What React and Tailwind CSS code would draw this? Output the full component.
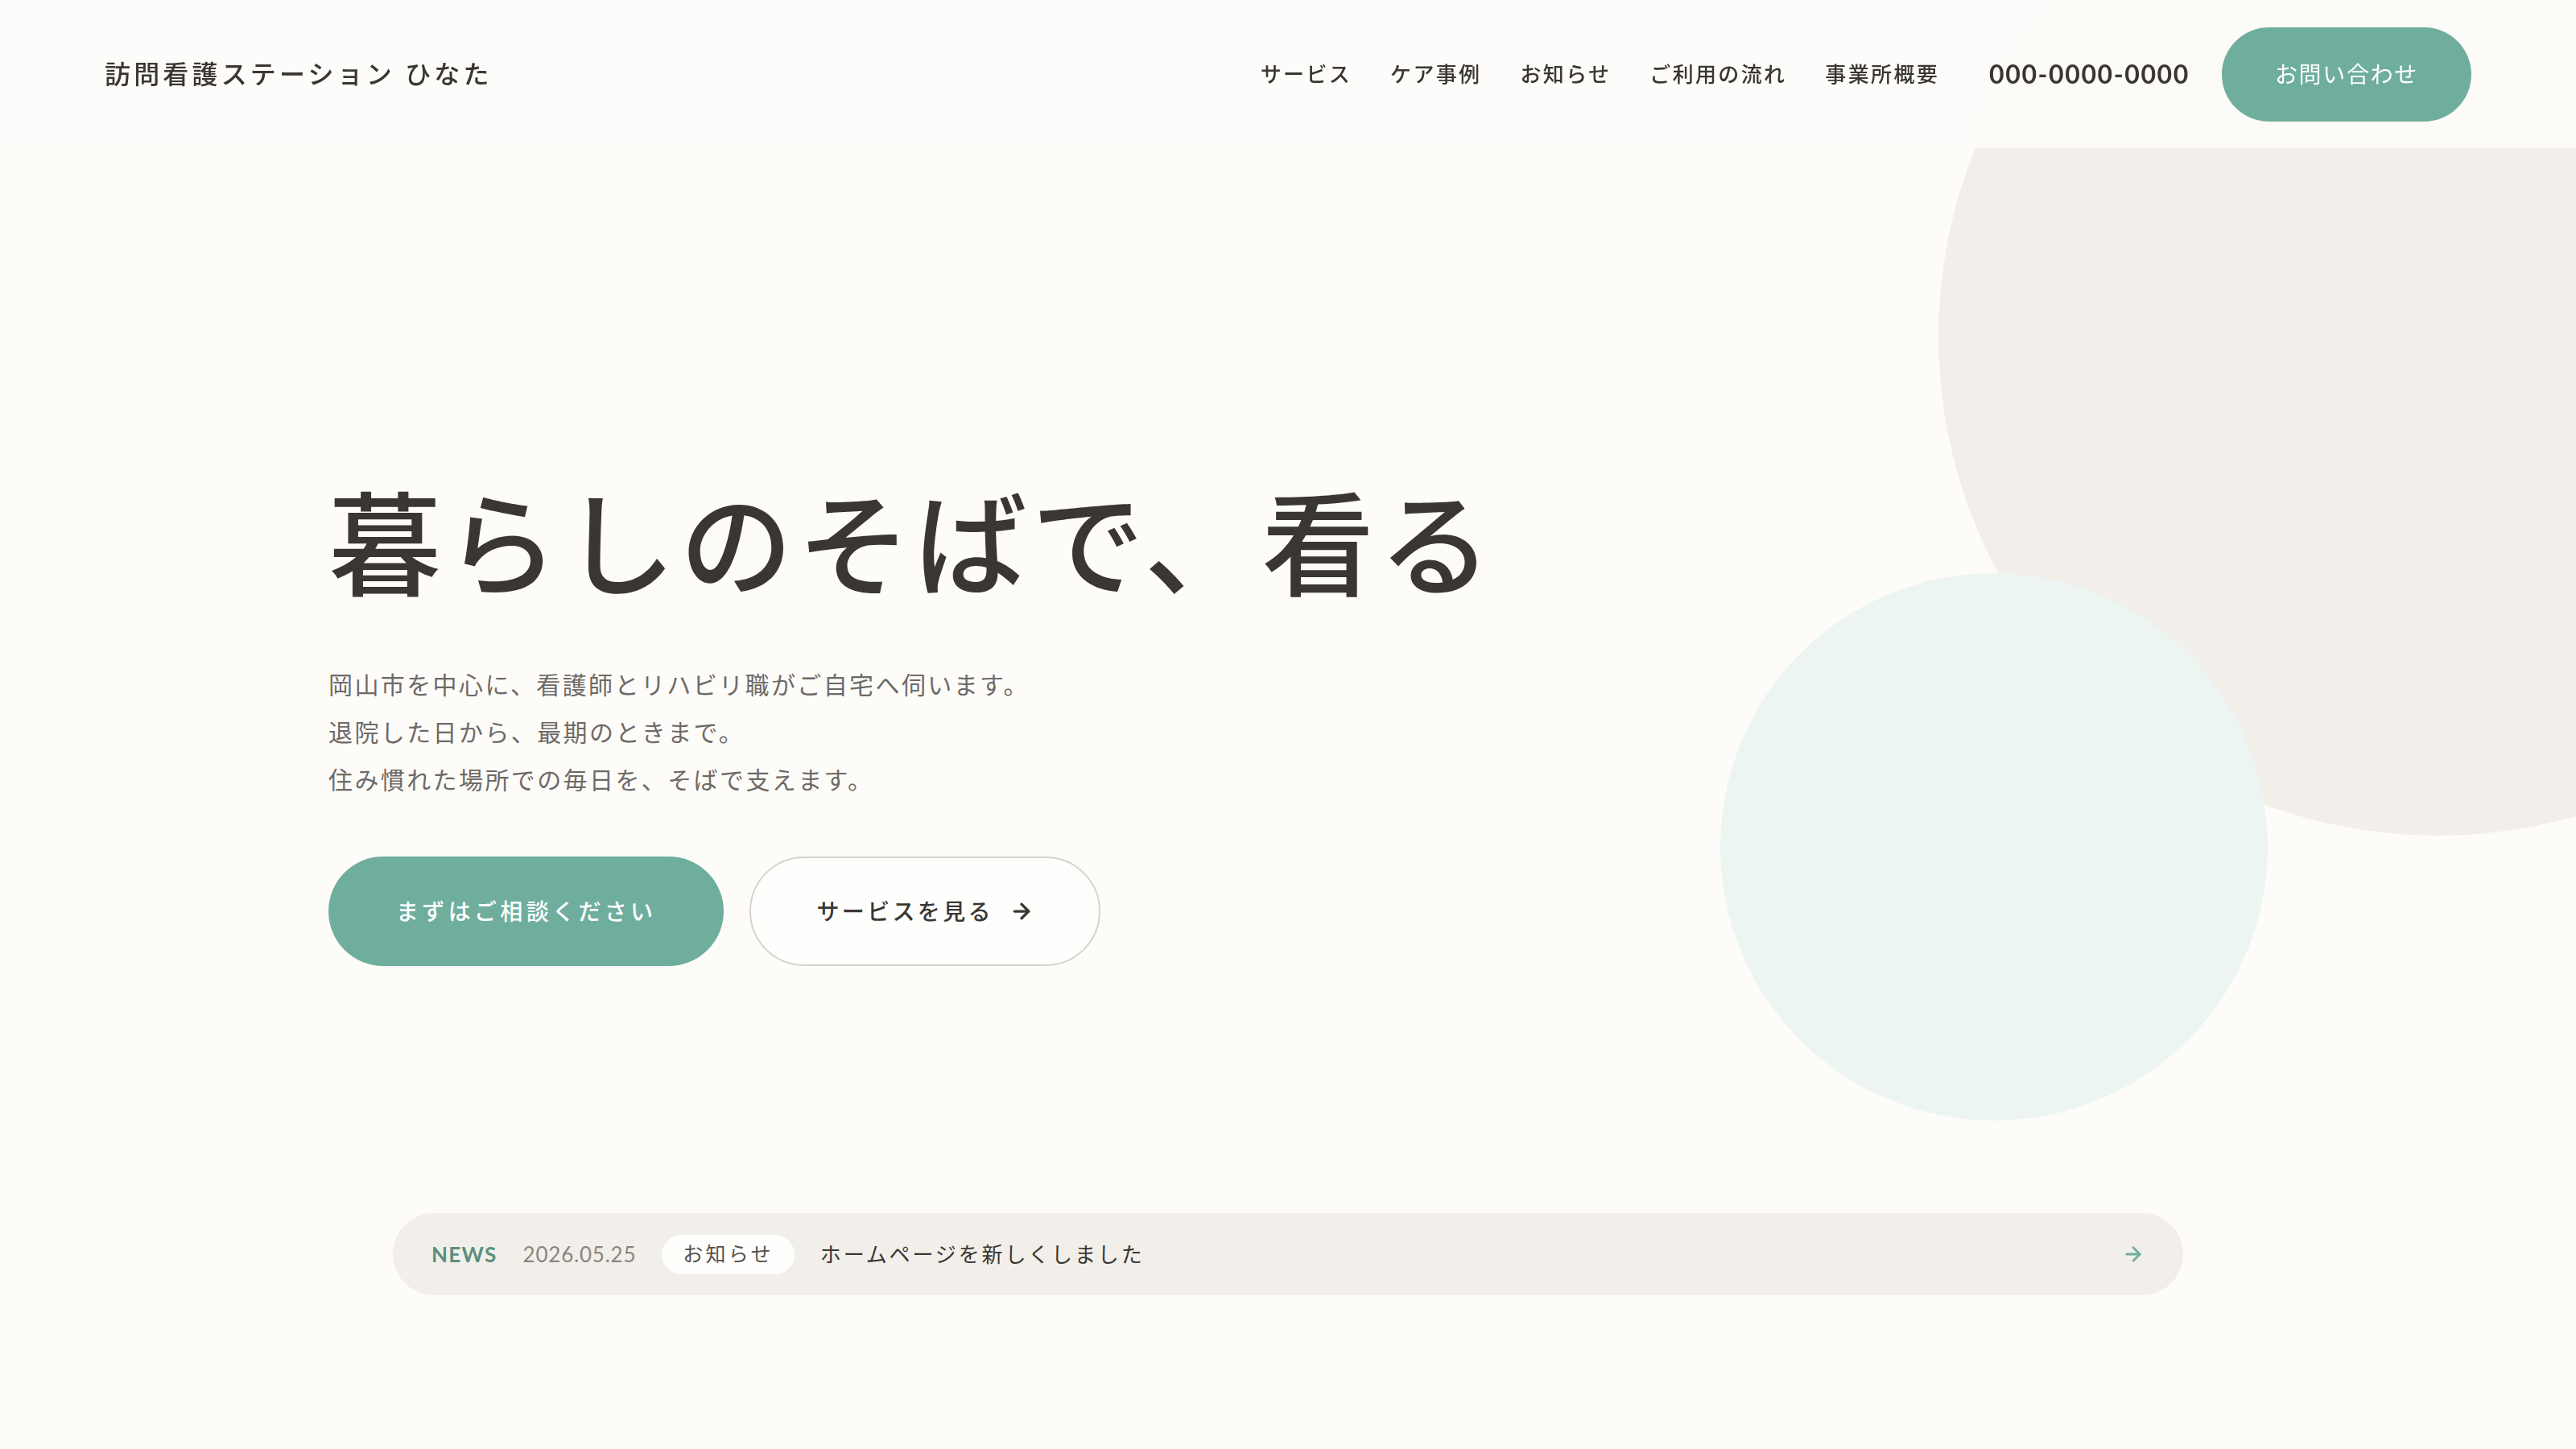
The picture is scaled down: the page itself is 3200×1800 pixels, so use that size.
import { ArrowRight } from "lucide-react";

const NAV_ITEMS = ["サービス", "ケア事例", "お知らせ", "ご利用の流れ", "事業所概要"];

const FONT = "font-['Lato','Noto_Sans_CJK_JP',sans-serif]";

function Header() {
  return (
    <header className="absolute inset-x-0 top-0 z-20 h-[184px] bg-[#fdfcf9]/90 backdrop-blur-md">
      <div className="flex h-full items-center justify-between px-[130px]">
        <a href="#" className="text-[32px] font-medium tracking-[0.13em] text-[#3a3733]">
          訪問看護ステーション ひなた
        </a>
        <div className="flex items-center">
          <nav className="flex items-center gap-[48px]">
            {NAV_ITEMS.map((item) => (
              <a key={item} href="#" className="text-[26px] font-medium tracking-[0.09em] text-[#3a3733]">
                {item}
              </a>
            ))}
          </nav>
          <span className="ml-[62px] text-[32px] font-bold tracking-[0.05em] text-[#3a3733]">
            000-0000-0000
          </span>
          <a
            href="#"
            className="ml-[40px] flex h-[117px] items-center rounded-full bg-[#6fae9d] px-[66px] text-[28px] tracking-[0.06em] text-white"
          >
            お問い合わせ
          </a>
        </div>
      </div>
    </header>
  );
}

function Hero() {
  return (
    <section className="relative h-[1800px] overflow-hidden">
      {/* decorative circles */}
      <div className="absolute left-[2408px] top-[-202px] h-[1240px] w-[1240px] rounded-full bg-[#f2eee9]" />
      <div className="absolute left-[2137px] top-[712px] h-[680px] w-[680px] rounded-full bg-[#ecf5f2]" />

      <div className="relative z-10 px-[408px] pt-[591px]">
        <h1 className="text-[140px] font-medium leading-[1.2] tracking-[0.04em] text-[#3a3733]">
          暮らしのそばで、看る
        </h1>
        <div className="mt-[62px] text-[30px] leading-[59px] tracking-[0.08em] text-[#6e6a66]">
          <p>岡山市を中心に、看護師とリハビリ職がご自宅へ伺います。</p>
          <p>退院した日から、最期のときまで。</p>
          <p>住み慣れた場所での毎日を、そばで支えます。</p>
        </div>
        <div className="mt-[66px] flex items-center gap-[32px]">
          <a
            href="#"
            className="flex h-[136px] items-center rounded-full bg-[#6fae9d] px-[84px] text-[28px] font-medium tracking-[0.155em] text-white"
          >
            まずはご相談ください
          </a>
          <a
            href="#"
            className="flex h-[136px] items-center gap-[20px] rounded-full border-2 border-[#d6d3cd] bg-[#fefefd] px-[81px] text-[28px] font-medium tracking-[0.12em] text-[#3a3733]"
          >
            サービスを見る
            <ArrowRight className="h-[30px] w-[30px]" strokeWidth={2.6} />
          </a>
        </div>
      </div>

      <div className="relative z-10 mx-auto mt-[307px] w-[2224px]">
        <a
          href="#"
          className="flex h-[102px] items-center gap-[32px] rounded-full bg-[#f2eee9] px-[48px]"
        >
          <span className="text-[26px] font-bold tracking-[0.05em] text-[#5b8f7f]">NEWS</span>
          <span className="text-[26px] tracking-[0.03em] text-[#8a8580]">2026.05.25</span>
          <span className="flex h-[49px] items-center rounded-full bg-[#fefefd] px-[26px] text-[25px] tracking-[0.13em] text-[#55514d]">
            お知らせ
          </span>
          <span className="text-[26px] tracking-[0.11em] text-[#3a3733]">
            ホームページを新しくしました
          </span>
          <ArrowRight className="ml-auto h-[28px] w-[28px] text-[#6fae9d]" strokeWidth={2.4} />
        </a>
      </div>
    </section>
  );
}

export default function App() {
  return (
    <div className={`relative min-h-screen bg-[#fdfcf9] ${FONT}`}>
      <Header />
      <Hero />
    </div>
  );
}
